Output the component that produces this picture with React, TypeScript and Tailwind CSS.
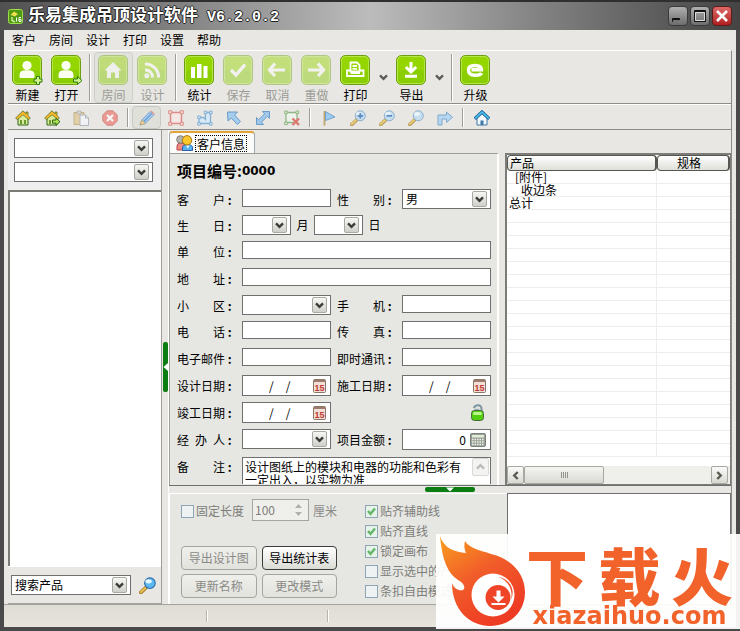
import React from "react";

/* ---------- shared bits ---------- */

const ChevronDown: React.FC<{ color?: string }> = ({ color = "#3c3c38" }) => (
  <svg width="9" height="7" viewBox="0 0 9 7" fill="none">
    <path d="M1 1.3 L4.5 4.8 L8 1.3" stroke={color} strokeWidth="2.4" />
  </svg>
);

interface ComboProps {
  label: string;
  value?: string;
  className?: string;
}

const Combo: React.FC<ComboProps> = ({ label, value = "", className = "w-full" }) => (
  <div className={`relative h-5 ${className}`}>
    <select
      aria-label={label}
      defaultValue={value}
      className="block h-5 w-full appearance-none border border-[#6f6f6f] bg-white pl-[3px] text-xs leading-[18px] text-black"
    >
      <option value={value}>{value}</option>
    </select>
    <span className="pointer-events-none absolute top-[2px] right-1 flex h-4 w-[15px] items-center justify-center rounded-xs border border-[#a8a8a2] bg-linear-to-b from-[#f6f6f4] to-[#d0d0ca]">
      <ChevronDown />
    </span>
  </div>
);

const TextField: React.FC<{ id: string }> = ({ id }) => (
  <input id={id} type="text" className="block h-[18px] w-full border border-[#6f6f6f] bg-white px-1 text-xs" />
);

const DateField: React.FC<{ id: string }> = ({ id }) => (
  <div className="flex h-[21px] items-center border border-[#6f6f6f] bg-white pr-1">
    <input id={id} type="text" defaultValue={"/\u2002\u2002/"} className="min-w-0 flex-1 pl-[26px] text-xs leading-4" />
    <button type="button" aria-label="日历">
      <svg width="13" height="14" viewBox="0 0 13 14">
        <rect x="0.5" y="0.5" width="12" height="13" rx="1" fill="#f2e0d8" stroke="#8a7566" />
        <rect x="1" y="1" width="11" height="2" fill="#9c7c6c" />
        <text x="6.5" y="11.6" textAnchor="middle" fontSize="9" fontFamily="Liberation Sans, sans-serif" fontWeight="bold" fill="#c23a34">15</text>
      </svg>
    </button>
  </div>
);

/* ---------- main toolbar ---------- */

const glyphs: Record<string, React.ReactNode> = {
  user: (
    <>
      <circle cx="15" cy="10.5" r="4.6" fill="#fbfff0" />
      <path d="M7.5 22 v-2 q0 -4.5 5 -4.8 h5 q5 .3 5 4.8 v2 q0 1 -1 1 h-13 q-1 0 -1 -1z" fill="#fbfff0" />
    </>
  ),
  house: <path d="M15 7 L23.5 15.5 H21 V23 H17 V17.5 H13 V23 H9 V15.5 H6.5z" fill="#fff" />,
  rss: (
    <g fill="none" stroke="#fff" strokeWidth="3">
      <path d="M8 9 A13 13 0 0 1 21.5 22.5" />
      <path d="M8 15 A7 7 0 0 1 15.5 22.5" />
      <circle cx="9.8" cy="20.8" r="1" />
    </g>
  ),
  chart: <path d="M7 12h4v11H7z M13 9h4.5v14H13z M19.5 11h4v12h-4z" fill="#fff" />,
  check: <path d="M8 15 L13 20 L22 9.5" fill="none" stroke="#fff" strokeWidth="3.4" />,
  left: <path d="M13 8.5 L7.5 15 L13 21 M8 15 H23" fill="none" stroke="#fff" strokeWidth="3.2" />,
  right: <path d="M17 8.5 L22.5 15 L17 21 M22 15 H7" fill="none" stroke="#fff" strokeWidth="3.2" />,
  print: (
    <g fill="none" stroke="#fff" strokeWidth="1.8">
      <path d="M10.5 16.5 V7.5 H17 L19.5 10 V16.5z M12.5 11h4.5 M12.5 13.8h4.5" />
      <path d="M10 15.5 H7 V21 H23.5 V15.5 H20 M10.5 18 h9.5" />
    </g>
  ),
  export: (
    <path d="M15 7 V16 M9.8 12 L15 17 L20.2 12 M9 21.3 H21" fill="none" stroke="#fff" strokeWidth="3" />
  ),
  upgrade: (
    <path d="M21.5 18 Q20.5 20.3 15 20.3 Q8.5 20.3 8.5 15 Q8.5 10.5 15 10.5 Q21.5 10.5 21.5 14.8 H11.5" fill="none" stroke="#fff" strokeWidth="3.4" />
  ),
};

interface ToolProps {
  label: string;
  glyph: string;
  disabled?: boolean;
  pressed?: boolean;
  badge?: "plus" | "arrow";
}

const Tool: React.FC<ToolProps> = ({ label, glyph, disabled, pressed, badge }) => (
  <button
    type="button"
    disabled={disabled}
    className={`flex h-[51px] w-[39px] flex-col items-center border pt-[2px] text-xs ${
      pressed ? "rounded-sm border-[#cfcfca] bg-[#e2e2dd]" : "border-transparent"
    } ${disabled ? "text-[#9b9b96]" : "text-black"}`}
  >
    <svg width="32" height="30" viewBox="0 0 32 30" className={`shrink-0 ${disabled ? "opacity-45" : ""}`}>
      <g>
        <rect x="0.5" y="0.5" width="29" height="29" rx="5" fill="#95d600" stroke="#6d9e12" />
        <rect x="1.5" y="1.5" width="27" height="27" rx="4" fill="none" stroke="#b5e64a" />
        <rect x="2" y="15" width="26" height="13" rx="4" fill="#8acd00" />
        {glyphs[glyph]}
      </g>
      {badge === "plus" && (
        <path d="M24.5 21.5h3v2.5h2.5v3h-2.5v2.5h-3V27H22v-3h2.5z" fill="#d2f590" stroke="#2f7a12" />
      )}
      {badge === "arrow" && (
        <path d="M22.5 24h4v-2.500l4.500 4 -4.500 4v-2.500h-4z" fill="#d2f590" stroke="#2f7a12" />
      )}
    </svg>
    <span className="mt-[3px] leading-[14px]">{label}</span>
  </button>
);

const ToolMenu: React.FC<{ label: string }> = ({ label }) => (
  <button type="button" aria-label={label} className="flex h-[51px] w-[17px] items-center justify-center">
    <ChevronDown color="#5c5c58" />
  </button>
);

const Divider: React.FC<{ className: string }> = ({ className }) => (
  <div className={`mx-[3px] w-[2px] border-r border-l border-r-white border-l-[#9c9c98] ${className}`} />
);

/* ---------- small toolbar ---------- */

const Lens: React.FC<{ sign?: string; strong?: boolean }> = ({ sign, strong }) => (
  <g opacity={strong ? 1 : 0.75}>
    <path d="M1.800 14.500 L6.500 10" stroke="#a8842c" strokeWidth="3.600" strokeLinecap="round" />
    <path d="M1.800 14.200 L6 10.200" stroke="#efc558" strokeWidth="1.800" strokeLinecap="round" />
    <circle cx="10.300" cy="5.800" r="5" fill={strong ? "#5cb8f2" : "#b9dcf4"} stroke={strong ? "#2a68a8" : "#6f9cc4"} />
    <ellipse cx="9" cy="4" rx="3" ry="2" fill="#e9f8ff" />
    {sign && <path d={sign} stroke="#2f6cb4" strokeWidth="1.800" />}
  </g>
);

const House: React.FC<{ roof: string; line: string; wall: string }> = ({ roof, line, wall }) => (
  <>
    <path d="M3 8v7h10V8L8 3.500z" fill={wall} stroke={line} />
    <path d="M8 .8 L0.600 8 L2.300 9.500 L8 4.800 L13.700 9.500 L15.400 8 L13 5.800V2h-2v1.800z" fill={roof} stroke={line} strokeWidth="0.700" />
    <path d="M8 2.800 L2 8.400 M8 2.800 L14 8.400" stroke={roof} strokeWidth="1.600" />
  </>
);

const smallIcons: Record<string, React.ReactNode> = {
  home: (
    <>
      <House roof="#f7b52e" line="#2f6618" wall="#d9ec9c" />
      <path d="M5 10h2v4H5z M9 10h2v4H9z" fill="#6a9b2c" />
    </>
  ),
  homeGo: (
    <>
      <House roof="#f7b52e" line="#2f6618" wall="#d9ec9c" />
      <path d="M5 10h2v4H5z" fill="#6a9b2c" />
      <path d="M8.500 10h3.500V8l4 3.700 -4 3.700v-2.200H8.500z" fill="#a9df50" stroke="#2f6618" />
    </>
  ),
  paste: (
    <g opacity="0.7">
      <path d="M1 2.500h10v12H1z" fill="#ddc68e" stroke="#b39b62" />
      <path d="M4 1h4v3H4z" fill="#ccc" stroke="#999" strokeWidth="0.700" />
      <path d="M7 5h5.500L15.500 8v7.500H7z" fill="#f5f7fa" stroke="#98a2ae" />
      <path d="M12.500 5v3h3" fill="none" stroke="#98a2ae" />
    </g>
  ),
  remove: (
    <g opacity="0.75">
      <path d="M5 .8h6L15.200 5v6L11 15.200H5L.8 11V5z" fill="#ec807a" stroke="#cc6864" />
      <path d="M5 5 L11 11 M11 5 L5 11" stroke="#fff" strokeWidth="2.200" />
    </g>
  ),
  pencil: (
    <g>
      <path d="M1 15 L2.800 10.200 L11.200 1.500 L14.800 4.800 L6.200 13.500z" fill="#b8d7f3" stroke="#6f9acb" />
      <path d="M4.500 12 L13 3.200" stroke="#6fa5dc" strokeWidth="1.800" />
      <path d="M1 15 L2.800 10.200 L6.200 13.500z" fill="#f2d6a4" stroke="#c4a168" strokeWidth="0.800" />
      <path d="M11.200 1.500 L12.500 .6 L15.800 3.800 L14.800 4.800z" fill="#e89a94" />
    </g>
  ),
  rect: (
    <g fill="#f7dedc" stroke="#dc8c86">
      <path d="M2.500 2.500h11v11h-11z" strokeWidth="1.500" fill="#f3e6e4" />
      <path d="M.7.7h3v3h-3z M12.300.7h3v3h-3z M.7 12.300h3v3h-3z M12.300 12.300h3v3h-3z" />
    </g>
  ),
  poly: (
    <g fill="#d9eaf7" stroke="#85b0d4">
      <path d="M2 13.500V7.500h4.500L8.500 9.500V2.500h5v11z" strokeWidth="1.300" />
      <path d="M.7 12.500h2.600v2.600H.7z M.7 6h2.600v2.600H.7z M7.200 1.200h2.600v2.600H7.200z M12.500 1.200h2.600v2.600h-2.600z M12.500 12.500h2.600v2.600h-2.600z" />
    </g>
  ),
  pointer: <path d="M1.500 2h10l-3 3 6 6.500 -3 3 -6.200 -6.500 -3.300 3z" fill="#a5cdee" stroke="#6b9cc8" />,
  resize: <path d="M7.500 1.500h7v7l-2.200-2.200-5.800 5.900 2 2.300h-7v-7l2.200 2.200 6-5.900z" fill="#9fc9ec" stroke="#6b9cc8" />,
  clear: (
    <g>
      <g fill="#dff0d4" stroke="#93b586">
        <path d="M2 2.500h11v10H2z" strokeWidth="1.300" fill="#eef3ea" />
        <path d="M.7 1h2.600v2.600H.7z M12 1h2.600v2.600H12z M.7 12h2.600v2.600H.7z" />
      </g>
      <path d="M8.500 8.500 L15 15 M15 8.500 L8.500 15" stroke="#dd7770" strokeWidth="2.400" />
    </g>
  ),
  flag: (
    <>
      <path d="M3.500 1v14.500" stroke="#c0a568" strokeWidth="1.800" />
      <path d="M4.500 1.500 L14 7 L4.500 10.500z" fill="#9cccf0" stroke="#6b9cc8" strokeWidth="0.900" />
    </>
  ),
  zoomIn: <Lens sign="M7.500 5.800h5.600 M10.300 3v5.600" />,
  zoomOut: <Lens sign="M7.500 5.800h5.600" />,
  zoom: <Lens />,
  redo: <path d="M1 15V5h8.500V2l6 5.200 -6 5.200V9H5v6z" fill="#b5d7f1" stroke="#7faad0" />,
  homeBlue: (
    <>
      <path d="M3 8v7h10V8L8 3.500z" fill="#f2f8fd" stroke="#3c79a8" />
      <path d="M.8 8.800 L8 2 L15.200 8.800" fill="none" stroke="#1b5f92" strokeWidth="3.200" />
      <path d="M1.200 8.400 L8 2.200 L14.800 8.400" fill="none" stroke="#4cc1f2" strokeWidth="1.600" />
      <path d="M6.500 10.500h3V15h-3z" fill="#3c79a8" />
    </>
  ),
};

const SmallTool: React.FC<{ name: string; label: string; pressed?: boolean }> = ({ name, label, pressed }) => (
  <button
    type="button"
    aria-label={label}
    className={`flex h-[23px] w-[29px] items-center justify-center border ${
      pressed ? "rounded-sm border-[#c9c9c4] bg-[#e0e0db]" : "border-transparent"
    }`}
  >
    <svg width="16" height="16" viewBox="0 0 16 16">{smallIcons[name]}</svg>
  </button>
);

/* ---------- window frame ---------- */

const TitleBar: React.FC = () => (
  <header className="flex h-[30px] shrink-0 items-center border-t-2 border-[#2f2f30] bg-linear-to-r from-[#505050] via-[#bcbcbc] to-[#444444] pr-2 pl-2">
    <svg width="15" height="15" viewBox="0 0 15 15">
      <rect x="0.500" y="0.500" width="14" height="14" rx="2" fill="#4f9a10" stroke="#9fdb4a" />
      <path d="M2.500 6 L6 2.500 L10 5 L7 7.500 L4.500 6.500z" fill="#f2dc50" />
      <path d="M4 8v3.500l3 1.500" stroke="#ccec9c" fill="none" strokeWidth="1.500" />
      <path d="M8.500 8.500v4 M13 8.500h-2v4h2v-2h-2" stroke="#fff" fill="none" />
    </svg>
    <h1 className="ml-[5px] flex items-baseline gap-[9px] text-[17px] leading-5 font-bold whitespace-nowrap text-white [text-shadow:1px_0_#222,-1px_0_#222,0_1px_#222,0_-1px_#222]">
      乐易集成吊顶设计软件
      <span className="font-['Liberation_Mono',monospace] text-[15px]">V6.2.0.2</span>
    </h1>
    <div className="mb-[1px] ml-auto flex gap-[2px]">
      <button type="button" aria-label="最小化" className="h-5 w-5 rounded-sm border border-[#3a3a3a] bg-linear-to-b from-[#b0b0b0] to-[#6d6d6d]">
        <svg width="18" height="18" viewBox="0 0 18 18">
          <path d="M3.500 11.500h7v3h-7z" fill="#111" stroke="#111" />
          <path d="M4 14h7" stroke="#ddd" />
        </svg>
      </button>
      <button type="button" aria-label="最大化" className="h-5 w-5 rounded-sm border border-[#3a3a3a] bg-linear-to-b from-[#b0b0b0] to-[#6d6d6d]">
        <svg width="18" height="18" viewBox="0 0 18 18" fill="none">
          <path d="M4.500 5.500h9v8h-9z" stroke="#ddd" />
          <path d="M3.500 3.500h11v11h-11z M4 4.500h10" stroke="#111" />
        </svg>
      </button>
      <button type="button" aria-label="关闭" className="h-5 w-5 rounded-sm border border-[#5c1c1c] bg-linear-to-b from-[#dd6868] to-[#b01a1e]">
        <svg width="18" height="18" viewBox="0 0 18 18">
          <path d="M4 4 L14 14 M14 4 L4 14" stroke="#fff" strokeWidth="2.600" />
        </svg>
      </button>
    </div>
  </header>
);

const MenuBar: React.FC = () => (
  <nav className="flex h-5 gap-[13px] pl-1 text-xs leading-5">
    {["客户", "房间", "设计", "打印", "设置", "帮助"].map((item) => (
      <button key={item} type="button">{item}</button>
    ))}
  </nav>
);

/* ---------- left: product browser ---------- */

const ProductPane: React.FC = () => (
  <aside className="flex w-[154px] shrink-0 flex-col border-r border-[#9c9c98]">
    <div className="flex flex-col gap-1 bg-[#efefef] py-2 pr-2 pl-[6px]">
      <Combo label="品牌" />
      <Combo label="分类" />
    </div>
    <div className="flex-1 border-t-2 border-l-2 border-[#7b7b78] bg-white" />
    <div className="flex h-[38px] shrink-0 items-center gap-2 border-t border-b border-t-white border-b-[#a3a39e] pl-[3px]">
      <Combo label="搜索产品" value="搜索产品" className="w-[120px]" />
      <button type="button" aria-label="搜索">
        <svg width="17" height="17" viewBox="0 0 16 16"><Lens strong /></svg>
      </button>
    </div>
  </aside>
);

/* ---------- centre: customer form ---------- */

const FormRow: React.FC<{ tall?: boolean; children: React.ReactNode }> = ({ tall, children }) => (
  <div className={`grid shrink-0 grid-cols-[65px_minmax(0,1fr)_71px_minmax(0,1fr)] items-start ${tall ? "h-[27px]" : "h-[26px]"}`}>
    {children}
  </div>
);

const Label: React.FC<{ htmlFor?: string; second?: boolean; children: React.ReactNode }> = ({ htmlFor, second, children }) => (
  <label htmlFor={htmlFor} className={`block text-xs leading-[22px] whitespace-pre ${second ? "pl-[6px]" : ""}`}>
    {children}<b> :</b>
  </label>
);

const CustomerForm: React.FC = () => (
  <form className="flex flex-1 flex-col overflow-hidden border-t border-l border-t-[#9c9c98] border-l-[#9c9c98] border-r-2 border-r-white bg-[#e6e7e3] pt-[7px] pr-[6px] pl-[7px]">
    <h2 className="mb-[8px] flex h-5 items-center text-[15px] leading-5 font-bold">
      项目编号:<span className="font-['DejaVu_Sans',sans-serif] text-xs">0000</span>
    </h2>
    <FormRow>
      <Label htmlFor="name">客　　户</Label>
      <TextField id="name" />
      <Label second>性　　别</Label>
      <Combo label="性别" value="男" />
    </FormRow>
    <div className="flex h-[26px] shrink-0 items-start">
      <div className="w-[65px]"><Label>生　　日</Label></div>
      <Combo label="月" className="w-[49px]" />
      <span className="w-[23px] text-center text-xs leading-5">月</span>
      <Combo label="日" className="w-[49px]" />
      <span className="w-[23px] text-center text-xs leading-5">日</span>
    </div>
    <div className="flex h-[27px] shrink-0 items-start">
      <div className="w-[65px]"><Label htmlFor="company">单　　位</Label></div>
      <div className="flex-1"><TextField id="company" /></div>
    </div>
    <div className="flex h-[27px] shrink-0 items-start">
      <div className="w-[65px]"><Label htmlFor="address">地　　址</Label></div>
      <div className="flex-1"><TextField id="address" /></div>
    </div>
    <FormRow>
      <Label>小　　区</Label>
      <Combo label="小区" />
      <Label second htmlFor="mobile">手　　机</Label>
      <TextField id="mobile" />
    </FormRow>
    <FormRow tall>
      <Label htmlFor="phone">电　　话</Label>
      <TextField id="phone" />
      <Label second htmlFor="fax">传　　真</Label>
      <TextField id="fax" />
    </FormRow>
    <FormRow tall>
      <Label htmlFor="email">电子邮件</Label>
      <TextField id="email" />
      <Label second htmlFor="im">即时通讯</Label>
      <TextField id="im" />
    </FormRow>
    <FormRow tall>
      <Label htmlFor="designDate">设计日期</Label>
      <DateField id="designDate" />
      <Label second htmlFor="buildDate">施工日期</Label>
      <DateField id="buildDate" />
    </FormRow>
    <FormRow tall>
      <Label htmlFor="finishDate">竣工日期</Label>
      <DateField id="finishDate" />
      <span />
      <button type="button" aria-label="锁定" className="mt-[2px] mr-[7px] justify-self-end">
        <svg width="13" height="17" viewBox="0 0 13 17">
          <path d="M3 4 Q3.500 1.200 7 1.200 Q10.500 1.200 10.500 5 V9" fill="none" stroke="#7d95a3" strokeWidth="2" />
          <path d="M3 5.500 h4.500 v2" fill="none" stroke="#9fb2bd" strokeWidth="1.500" />
          <rect x="0.500" y="6.500" width="12" height="10" rx="3" fill="#52d010" stroke="#4a6a3a" />
          <rect x="2" y="8" width="9" height="3" rx="1.500" fill="#b9f68c" />
        </svg>
      </button>
    </FormRow>
    <FormRow tall>
      <Label>{"经\u2002办\u2002人"}</Label>
      <Combo label="经办人" />
      <Label second htmlFor="amount">项目金额</Label>
      <div className="flex h-[21px] items-center gap-1 border border-[#6f6f6f] bg-white pr-1">
        <input id="amount" type="text" defaultValue="0" className="min-w-0 flex-1 text-right text-xs" />
        <button type="button" aria-label="计算器">
          <svg width="16" height="14" viewBox="0 0 16 14">
            <rect x="0.500" y="0.500" width="15" height="13" rx="1.500" fill="#9aa197" stroke="#7b8178" />
            <rect x="2" y="2" width="12" height="2.500" fill="#e2ecd8" />
            <path d="M2 6.500h12 M2 9h12 M2 11.500h12" stroke="#eef2ea" strokeWidth="1.300" strokeDasharray="1.500 1" />
          </svg>
        </button>
      </div>
    </FormRow>
    <div className="flex min-h-[28px] flex-1 items-start">
      <div className="w-[65px]"><Label htmlFor="remark">备　　注</Label></div>
      <div className="mt-[1px] flex h-[27px] flex-1 items-start border border-b-0 border-[#6f6f6f] bg-white">
        <textarea
          id="remark"
          defaultValue="设计图纸上的模块和电器的功能和色彩有一定出入，以实物为准"
          className="block h-[26px] min-w-0 flex-1 resize-none overflow-hidden pt-[2px] pr-[9px] pl-[2px] text-xs leading-[13px]"
        />
        <button type="button" aria-label="向上滚动" className="mr-[1px] flex h-[18px] w-[17px] rotate-180 items-center justify-center rounded-xs border border-[#d8d8d4] bg-[#f3f3f1]">
          <ChevronDown color="#bdbdb8" />
        </button>
      </div>
    </div>
  </form>
);

/* ---------- right: product list ---------- */

const rows = ["\u2002[附件]", "\u2002\u2002收边条", "总计"];
const ROW_COUNT = 22;

const ProductTable: React.FC = () => (
  <section className="flex w-[226px] shrink-0 flex-col overflow-hidden border-t-2 border-r border-b border-l-2 border-[#7c7c79] bg-white">
    <div className="min-h-0 flex-1 overflow-hidden">
      <table className="w-full table-fixed border-separate border-spacing-0 text-xs">
        <thead>
          <tr className="h-4">
            <th className="w-[150px] rounded-sm border border-r-2 border-[#55564f] bg-linear-to-b from-white to-[#dedfd8] p-0 pl-[2px] text-left leading-[14px] font-normal">产品</th>
            <th className="rounded-sm border border-r-2 border-[#55564f] bg-linear-to-b from-white to-[#dedfd8] p-0 pr-2 leading-[14px] font-normal">规格</th>
          </tr>
        </thead>
        <tbody>
          {Array.from({ length: ROW_COUNT }, (_, i) => (
            <tr key={i} className="h-[13px]">
              <td className="border-r border-b border-[#ededed] p-0 pl-[2px] leading-3 whitespace-pre">{rows[i] ?? ""}</td>
              <td className="border-b border-[#ededed] p-0" />
            </tr>
          ))}
        </tbody>
      </table>
    </div>
    <div className="flex h-[18px] shrink-0 bg-[#efefec]">
      <button type="button" aria-label="向左滚动" className="flex w-[17px] items-center justify-center rounded-xs border border-[#a9a9a3] bg-linear-to-b from-[#fafaf8] to-[#d9d9d4]">
        <span className="rotate-90"><ChevronDown color="#5a5a52" /></span>
      </button>
      <div className="flex w-20 items-center justify-center gap-[1px] rounded-xs border border-[#a9a9a3] bg-linear-to-b from-[#f4f4f1] to-[#d9d9d4]">
        {[0, 1, 2, 3].map((i) => (
          <i key={i} className="h-[6px] w-[1px] border-r border-[#93938e]" />
        ))}
      </div>
      <button type="button" aria-label="向右滚动" className="mr-[2px] ml-auto flex w-[17px] items-center justify-center rounded-xs border border-[#a9a9a3] bg-linear-to-b from-[#fafaf8] to-[#d9d9d4]">
        <span className="-rotate-90"><ChevronDown color="#5a5a52" /></span>
      </button>
    </div>
  </section>
);

/* ---------- bottom: drawing options ---------- */

const Check: React.FC<{ label: string; checked?: boolean }> = ({ label, checked }) => (
  <label className="flex h-5 items-center gap-[2px] text-xs whitespace-nowrap text-[#7d7d79]">
    <span className="relative h-[13px] w-[13px]">
      <input
        type="checkbox"
        defaultChecked={checked}
        disabled
        className="block h-[13px] w-[13px] appearance-none border border-[#8fa5b5] bg-[#eff2f2] checked:bg-[#e6f3e8]"
      />
      {checked && (
        <svg width="13" height="13" viewBox="0 0 13 13" className="absolute inset-0">
          <path d="M3 6 L5.500 8.800 L10 3.500" fill="none" stroke="#67b56b" strokeWidth="2.400" />
        </svg>
      )}
    </span>
    {label}
  </label>
);

const PushButton: React.FC<{ label: string; active?: boolean }> = ({ label, active }) => (
  <button
    type="button"
    disabled={!active}
    className={`h-6 rounded-sm border bg-linear-to-b text-xs leading-5 ${
      active ? "border-[#3c3c3a] from-white to-[#dcdcd6] text-black" : "border-[#a5a5a0] from-[#efefec] to-[#e2e2dd] text-[#8a8a86]"
    }`}
  >
    {label}
  </button>
);

const OptionsPane: React.FC = () => (
  <div className="flex shrink-0">
    <div className="flex h-[111px] flex-1 gap-7 border-t border-l border-white bg-[#e6e7e3] pt-[5px] pl-[11px]">
      <div className="flex w-[156px] flex-col">
        <div className="flex h-6 items-start">
          <div className="mt-[2px]"><Check label="固定长度" /></div>
          <div className="ml-2 flex h-[22px] w-[57px] shrink-0 items-center border border-[#a5a5a0] bg-[#efefec] pr-[6px]">
            <input aria-label="长度" disabled defaultValue="100" className="min-w-0 flex-1 pl-[2px] text-xs text-[#7d7d79]" />
            <svg width="7" height="14" viewBox="0 0 7 14" fill="#b0b0aa">
              <path d="M0 5 L3.500 1 L7 5z M0 9 L3.500 13 L7 9z" />
            </svg>
          </div>
          <span className="ml-1 text-xs leading-[23px] whitespace-nowrap text-[#8a8a86]">厘米</span>
        </div>
        <div className="mt-[23px] grid grid-cols-2 gap-x-[5px] gap-y-1">
          <PushButton label="导出设计图" />
          <PushButton label="导出统计表" active />
          <PushButton label="更新名称" />
          <PushButton label="更改模式" />
        </div>
      </div>
      <div className="mt-[2px]">
        <Check label="贴齐辅助线" checked />
        <Check label="贴齐直线" checked />
        <Check label="锁定画布" checked />
        <Check label="显示选中的产品" />
        <Check label="条扣自由模式" />
      </div>
    </div>
    <div className="w-[224px] border-t border-r border-l border-[#6f6f6f] bg-white" />
  </div>
);

/* ---------- site mark over the lower right corner ---------- */

const SiteMark: React.FC = () => (
  <div className="fixed right-0 bottom-[2px] flex h-[95px] w-[304px] bg-white/93 pr-[7px] text-[#f2622b]">
    <svg width="90" height="95" viewBox="0 0 90 95" className="shrink-0">
      <defs>
        <linearGradient id="flame" x1="0" y1="0" x2="0.600" y2="1">
          <stop offset="0" stopColor="#f9a01f" />
          <stop offset="0.500" stopColor="#f15c2a" />
          <stop offset="1" stopColor="#ee3b24" />
        </linearGradient>
      </defs>
      <path
        d="M4 2 C8 14 18 18 30 19 C28 15 28 11 29 7 C34 15 44 16 55 20 C76 25 89 40 89 58 C89 78 74 92 54 92 C34 92 16 76 16 49 C18 55 23 57 27 56 C30 54 28 49 22 46 C12 40 6 26 4 2z"
        fill="url(#flame)"
      />
      <circle cx="57" cy="61" r="21.500" fill="#fff" />
      <path d="M62 43 A19 19 0 0 1 75 66 A16 16 0 0 0 62 43z" fill="#f04a28" />
      <circle cx="62" cy="63.500" r="12.500" fill="#ef4427" />
      <path d="M60.500 56.500h4v6h4l-6 6 -6-6h4z M55.500 69h14v2h-14z" fill="#fff" />
    </svg>
    <div className="flex flex-1 flex-col">
      <div className="mt-2 flex justify-between text-[62px] leading-[64px] font-black">
        <span>下</span>
        <span>载</span>
        <span>火</span>
      </div>
      <span className="mt-[1px] text-center font-['DejaVu_Sans',sans-serif] text-2xl leading-[18px] font-bold">xiazaihuo.com</span>
    </div>
  </div>
);

export default function App() {
  return (
    <div className="flex min-h-screen flex-col bg-[#4a4a4b] font-['Noto_Sans_CJK_SC','Liberation_Sans',sans-serif] text-black">
      <TitleBar />
      <div className="mx-1 mb-1 flex flex-1 flex-col bg-[#e8e7e3] px-1">
        <MenuBar />
        <div className="flex flex-1 flex-col border-t border-r border-t-white border-r-[#8c8c88]">
          <div className="flex border-b border-[#8c8c88] pt-[1px]">
            <Tool label="新建" glyph="user" badge="plus" />
            <Tool label="打开" glyph="user" badge="arrow" />
            <Divider className="my-[2px]" />
            <Tool label="房间" glyph="house" disabled pressed />
            <Tool label="设计" glyph="rss" disabled />
            <Divider className="my-[2px]" />
            <Tool label="统计" glyph="chart" />
            <Tool label="保存" glyph="check" disabled />
            <Tool label="取消" glyph="left" disabled />
            <Tool label="重做" glyph="right" disabled />
            <Tool label="打印" glyph="print" />
            <ToolMenu label="打印选项" />
            <Tool label="导出" glyph="export" />
            <ToolMenu label="导出选项" />
            <Divider className="my-[2px]" />
            <Tool label="升级" glyph="upgrade" />
          </div>

          <div className="flex border-t border-b border-t-white border-b-[#8c8c88] pt-[1px]">
            <SmallTool name="home" label="主页" />
            <SmallTool name="homeGo" label="进入房间" />
            <SmallTool name="paste" label="粘贴" />
            <SmallTool name="remove" label="删除" />
            <Divider className="my-[2px]" />
            <SmallTool name="pencil" label="画笔" pressed />
            <SmallTool name="rect" label="矩形" />
            <SmallTool name="poly" label="多边形" />
            <SmallTool name="pointer" label="选择" />
            <SmallTool name="resize" label="缩放" />
            <SmallTool name="clear" label="清除" />
            <Divider className="my-[2px]" />
            <SmallTool name="flag" label="标记" />
            <SmallTool name="zoomIn" label="放大" />
            <SmallTool name="zoomOut" label="缩小" />
            <SmallTool name="zoom" label="适合窗口" />
            <SmallTool name="redo" label="转到" />
            <Divider className="my-[2px]" />
            <SmallTool name="homeBlue" label="首页" />
          </div>

          <main className="flex flex-1">
            <ProductPane />
            <div className="flex w-[7px] shrink-0 items-center justify-end border-r border-white">
              <div className="flex h-[50px] w-[5px] items-center rounded-xs bg-[#0b7d12]">
                <svg width="5" height="8" viewBox="0 0 5 8"><path d="M5 0 V8 L0.500 4z" fill="#fff" /></svg>
              </div>
            </div>
            <div className="flex min-w-0 flex-1 flex-col">
              <div className="flex h-[23px] shrink-0 items-end">
                <button type="button" className="flex h-[22px] w-[86px] items-center gap-[2px] rounded-t-sm border border-t-2 border-b-0 border-[#9aa9b5] border-t-[#e0a43a] bg-[#fbfbfa] pl-[6px] text-xs">
                  <svg width="17" height="16" viewBox="0 0 17 16" className="shrink-0">
                    <path d="M1 15V11q0-3 4-3t4 3v4z" fill="#ee8a84" stroke="#b34844" />
                    <circle cx="4.500" cy="4.500" r="3.800" fill="#b4b4ae" stroke="#7f7f79" />
                    <path d="M6.500 15.500V13q0-3.500 5-3.500t5 3.500v2.500z" fill="#5ab2f0" stroke="#2a62a5" />
                    <path d="M10 10.500h3.500l-1.700 3z" fill="#fff" />
                    <circle cx="11" cy="5.300" r="4.700" fill="#fbc72c" stroke="#a87a10" />
                  </svg>
                  <span className="border border-dotted border-black px-[1px] leading-[15px]">客户信息</span>
                </button>
              </div>
              <div className="flex flex-1 gap-[6px] border-b border-[#6f6f6f]">
                <CustomerForm />
                <ProductTable />
              </div>
              <div className="flex h-[7px] shrink-0 items-center justify-center">
                <div className="flex h-[5px] w-[50px] justify-center rounded-xs bg-[#0b7d12]">
                  <svg width="8" height="5" viewBox="0 0 8 5"><path d="M0 0.500 H8 L4 4.500z" fill="#fff" /></svg>
                </div>
              </div>
              <OptionsPane />
            </div>
          </main>
        </div>
        <footer className="-mx-1 flex h-[23px] shrink-0 items-center border-t border-[#a3a39e] bg-linear-to-b from-[#dedcd4] to-[#e6e4dd]">
          <div className="ml-[202px] h-3 w-[2px] border-r border-l border-r-white border-l-[#b5b5ae]" />
          <div className="ml-[119px] h-3 w-[2px] border-r border-l border-r-white border-l-[#b5b5ae]" />
        </footer>
      </div>
      <SiteMark />
    </div>
  );
}
